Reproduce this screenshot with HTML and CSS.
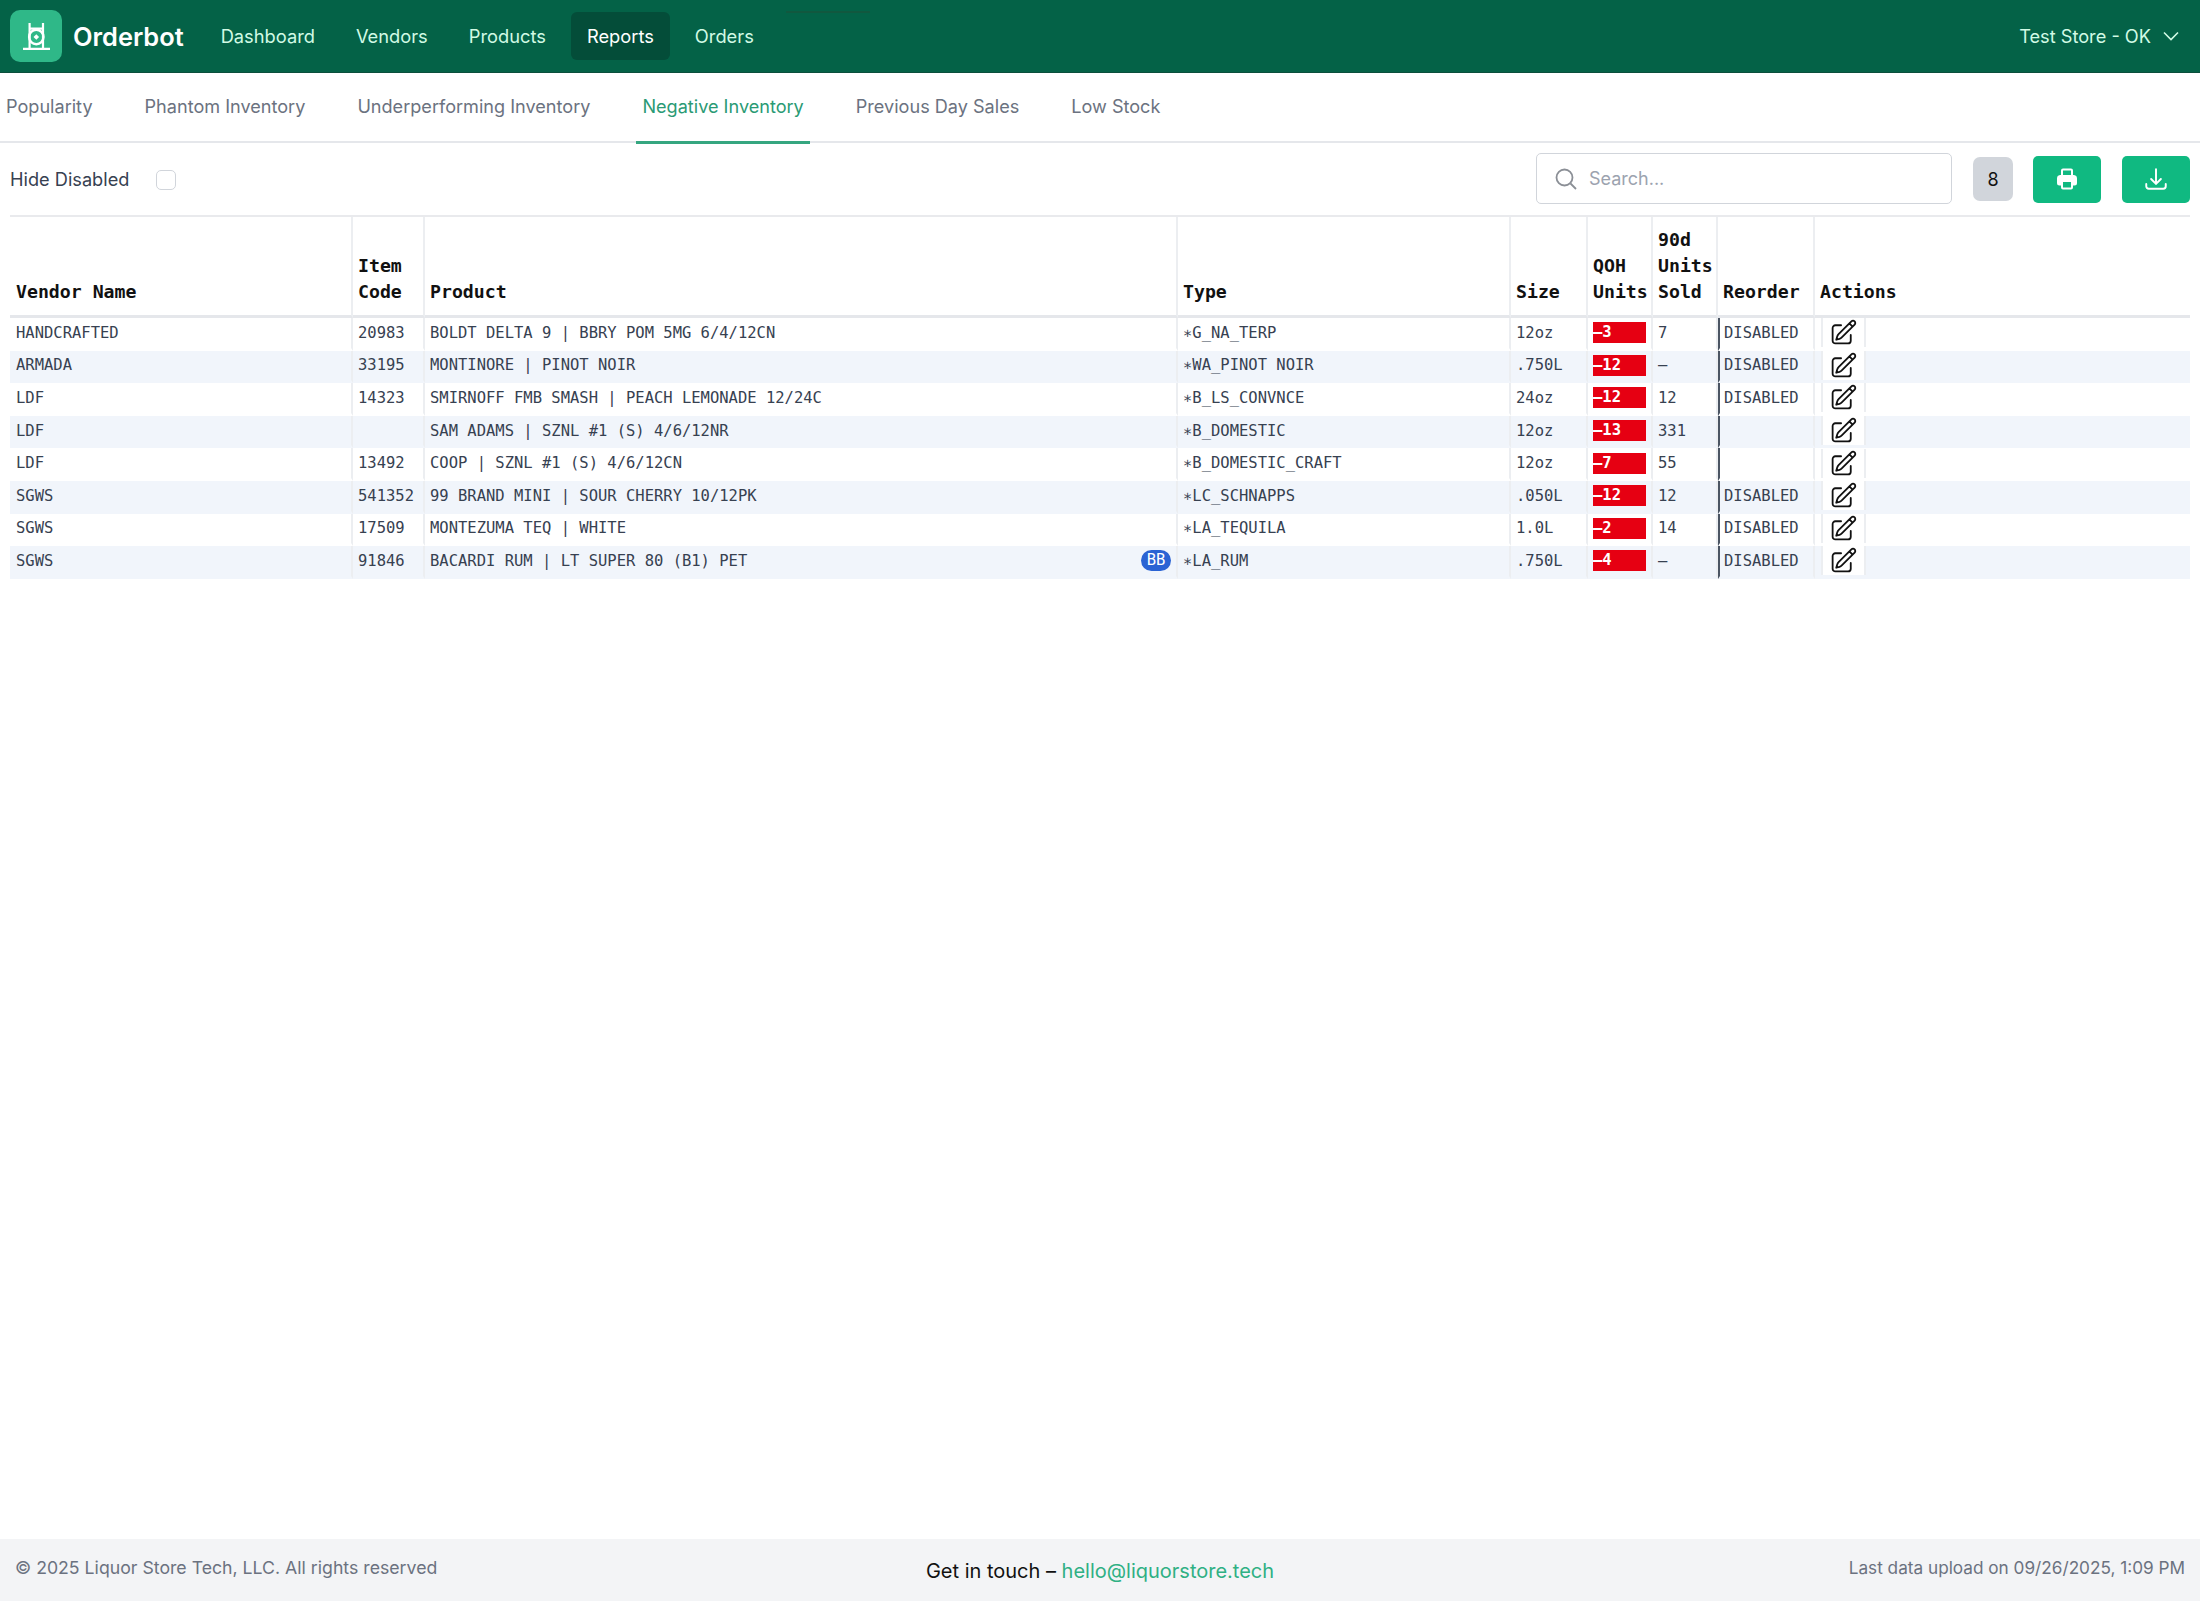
FILE: index.html
```html
<!DOCTYPE html>
<html lang="en">
<head>
    <meta charset="UTF-8">
    <meta name="viewport" content="width=device-width, initial-scale=1.0">
    <title>Orderbot - Negative Inventory</title>
    <link rel="stylesheet" href="styles.css">
</head>
<body>
    <!-- Top navigation -->
    <header class="topbar">
        <div class="brand">
            <span class="brand-logo">
                <svg viewBox="0 0 52 52" width="52" height="52" fill="none" stroke="#fff" stroke-width="2.2">
                    <path d="M13 38.800h27M19.600 13v25.800M33 13v25.800M19.600 18.700H33"/>
                    <circle cx="26.300" cy="27" r="7.200" stroke-width="2.400"/>
                    <path d="M26.300 24.200l2.800 2.800-2.800 2.800-2.800-2.800z" fill="#fff" stroke="none"/>
                </svg>
            </span>
            <span class="brand-name">Orderbot</span>
        </div>
        <nav class="main-nav">
            <a class="nav-link">Dashboard</a>
            <a class="nav-link">Vendors</a>
            <a class="nav-link">Products</a>
            <a class="nav-link active">Reports</a>
            <a class="nav-link">Orders</a>
        </nav>
        <div class="store-select">
            <span>Test Store - OK</span>
            <svg viewBox="0 0 24 24" width="24" height="24" fill="none" stroke="currentColor" stroke-width="1.600">
                <path d="M5 8.500l7 7 7-7"/>
            </svg>
        </div>
    </header>

    <!-- Report tabs -->
    <div class="tabs">
        <a class="tab">Popularity</a>
        <a class="tab">Phantom Inventory</a>
        <a class="tab">Underperforming Inventory</a>
        <a class="tab active">Negative Inventory</a>
        <a class="tab">Previous Day Sales</a>
        <a class="tab">Low Stock</a>
    </div>

    <main class="content">
        <div class="toolbar">
            <label class="hide-disabled">
                <span>Hide Disabled</span>
                <span class="checkbox"></span>
            </label>
            <div class="search">
                <svg viewBox="0 0 24 24" width="24" height="24" fill="none" stroke="#8b8f96" stroke-width="1.800">
                    <circle cx="10.500" cy="10.500" r="8"/>
                    <path d="M16.500 16.500L22 22"/>
                </svg>
                <span>Search...</span>
            </div>
            <span class="count">8</span>
            <button class="btn btn-print" type="button">
                <svg viewBox="0 0 24 24" width="24" height="24" fill="#fff">
                    <path fill-rule="evenodd" d="M6 3.500A2 2 0 0 1 8 1.500h8a2 2 0 0 1 2 2V8h1a3.500 3.500 0 0 1 3 3.500V16a2.500 2.500 0 0 1-2.500 2.500H18v2a2 2 0 0 1-2 2H8a2 2 0 0 1-2-2v-2H4.500A2.500 2.500 0 0 1 2 16v-4.500A3.500 3.500 0 0 1 5 8h1zM8 3.500V8h8V3.500zM8 15v5.500h8V15z"/>
                </svg>
            </button>
            <button class="btn btn-download" type="button">
                <svg viewBox="0 0 24 24" width="26" height="26" fill="none" stroke="#fff" stroke-width="1.800" stroke-linecap="round" stroke-linejoin="round">
                    <path d="M3 16.500v2.250A2.250 2.250 0 0 0 5.250 21h13.500A2.250 2.250 0 0 0 21 18.750V16.500M16.500 12L12 16.500m0 0L7.500 12m4.500 4.500V3"/>
                </svg>
            </button>
        </div>

        <table class="report-table">
            <colgroup>
                <col class="col-vendor">
                <col class="col-code">
                <col class="col-product">
                <col class="col-type">
                <col class="col-size">
                <col class="col-qoh">
                <col class="col-sold">
                <col class="col-reorder">
                <col>
            </colgroup>
            <thead>
                <tr>
                    <th>Vendor Name</th>
                    <th>Item Code</th>
                    <th>Product</th>
                    <th>Type</th>
                    <th>Size</th>
                    <th>QOH Units</th>
                    <th>90d Units Sold</th>
                    <th>Reorder</th>
                    <th>Actions</th>
                </tr>
            </thead>
            <tbody id="rows"></tbody>
        </table>
    </main>

    <footer class="footer">
        <span class="footer-copy">© 2025 Liquor Store Tech, LLC. All rights reserved</span>
        <span class="footer-contact">Get in touch – <a class="footer-link">hello@liquorstore.tech</a></span>
        <span class="footer-upload">Last data upload on 09/26/2025, 1:09 PM</span>
    </footer>

    <script>
        var items = [
            ["HANDCRAFTED", "20983", "BOLDT DELTA 9 | BBRY POM 5MG 6/4/12CN", "∗G_NA_TERP", "12oz", "–3", "7", "DISABLED"],
            ["ARMADA", "33195", "MONTINORE | PINOT NOIR", "∗WA_PINOT NOIR", ".750L", "–12", "–", "DISABLED"],
            ["LDF", "14323", "SMIRNOFF FMB SMASH | PEACH LEMONADE 12/24C", "∗B_LS_CONVNCE", "24oz", "–12", "12", "DISABLED"],
            ["LDF", "", "SAM ADAMS | SZNL #1 (S) 4/6/12NR", "∗B_DOMESTIC", "12oz", "–13", "331", ""],
            ["LDF", "13492", "COOP | SZNL #1 (S) 4/6/12CN", "∗B_DOMESTIC_CRAFT", "12oz", "–7", "55", ""],
            ["SGWS", "541352", "99 BRAND MINI | SOUR CHERRY 10/12PK", "∗LC_SCHNAPPS", ".050L", "–12", "12", "DISABLED"],
            ["SGWS", "17509", "MONTEZUMA TEQ | WHITE", "∗LA_TEQUILA", "1.0L", "–2", "14", "DISABLED"],
            ["SGWS", "91846", "BACARDI RUM | LT SUPER 80 (B1) PET", "∗LA_RUM", ".750L", "–4", "–", "DISABLED", true]
        ];

        var pencil = '<svg viewBox="0 0 24 24" width="29" height="29" fill="none" stroke="#111" stroke-width="1.500" stroke-linecap="round" stroke-linejoin="round">' +
            '<path d="m16.862 4.487 1.687-1.688a1.875 1.875 0 1 1 2.652 2.652L10.582 16.070a4.500 4.500 0 0 1-1.897 1.130L6 18l.8-2.685a4.500 4.500 0 0 1 1.130-1.897l8.932-8.931Zm0 0L19.500 7.125M18 14v4.750A2.250 2.250 0 0 1 15.750 21H5.250A2.250 2.250 0 0 1 3 18.750V8.250A2.250 2.250 0 0 1 5.250 6H10"/></svg>';

        var rows = items.map(function(item) {
            var badge = item[8] ? '<span class="badge">BB</span>' : '';
            return `<tr>
                <td>${item[0]}</td>
                <td>${item[1]}</td>
                <td><div class="product-cell"><span>${item[2]}</span>${badge}</div></td>
                <td>${item[3]}</td>
                <td>${item[4]}</td>
                <td><span class="qoh">${item[5]}</span></td>
                <td>${item[6]}</td>
                <td class="reorder">${item[7]}</td>
                <td class="actions"><span class="edit">${pencil}</span></td>
            </tr>`;
        });
        document.getElementById("rows").innerHTML = rows.join("");
    </script>
</body>
</html>
```

FILE: styles.css
```css
* {
    box-sizing: border-box;
}
html, body {
    height: 100%;
}
body {
    margin: 0;
    display: flex;
    flex-direction: column;
    background: #fff;
    font-family: Inter, "Liberation Sans", sans-serif;
    color: #111827;
}
.topbar {
    position: relative;
    height: 73px;
    flex: none;
    display: flex;
    align-items: center;
    padding: 0 17px 0 10px;
    background: #046247;
    border-bottom: 1px solid #0b4f3c;
}
/* faint mark along the top of the bar */
.topbar::before {
    content: "";
    position: absolute;
    left: 786px;
    top: 11px;
    width: 84px;
    height: 2px;
    background: #11583f;
}
.brand {
    display: flex;
    align-items: center;
    gap: 11px;
}
.brand-logo {
    width: 52px;
    height: 52px;
    display: block;
    border-radius: 10px;
    background: #2fb888;
}
.brand-name {
    color: #fff;
    font-size: 25.400px;
    font-weight: 600;
}
.main-nav {
    display: flex;
    align-items: center;
    gap: 9px;
    margin-left: 21px;
}
.nav-link {
    padding: 13px 16px;
    border-radius: 6px;
    color: #d1fae5;
    font-size: 18.300px;
    line-height: 22px;
}
.nav-link.active {
    background: #044d39;
    color: #fff;
}
.store-select {
    margin-left: auto;
    display: flex;
    align-items: center;
    gap: 8px;
    color: #d1fae5;
    font-size: 18.200px;
}
.tabs {
    height: 70px;
    flex: none;
    display: flex;
    gap: 40px;
    border-bottom: 2px solid #e5e7eb;
}
.tab {
    height: 70px;
    padding: 0 6px;
    line-height: 67px;
    color: #6b7280;
    font-size: 18.100px;
}
.tab.active {
    height: 71px;
    color: #2a9a74;
    border-bottom: 3px solid #35a680;
}
.content {
    flex: 1;
    padding: 0 10px;
}
.toolbar {
    height: 74px;
    display: flex;
    align-items: center;
    border-bottom: 2px solid #e9eaed;
}
.hide-disabled {
    display: flex;
    align-items: center;
    gap: 27px;
    font-size: 18.200px;
    color: #374151;
}
.checkbox {
    width: 20px;
    height: 20px;
    margin-top: 2px;
    border: 1.500px solid #d1d5db;
    border-radius: 5px;
}
.search {
    width: 416px;
    height: 51px;
    margin-top: -1px;
    margin-left: auto;
    display: flex;
    align-items: center;
    gap: 11px;
    padding-left: 17px;
    border: 1.500px solid #d1d5db;
    border-radius: 5px;
    color: #9ca3af;
    font-size: 18px;
}
.count {
    width: 40px;
    height: 44px;
    margin-left: 21px;
    display: flex;
    align-items: center;
    justify-content: center;
    border-radius: 7px;
    background: #d1d5db;
    color: #111;
    font-size: 18px;
}
.btn {
    width: 68px;
    height: 47px;
    display: flex;
    align-items: center;
    justify-content: center;
    padding: 0;
    border: none;
    border-radius: 5px;
    background: #10b981;
}
.btn-print {
    margin-left: 20px;
}
.btn-download {
    margin-left: 21px;
}
.report-table {
    width: 100%;
    table-layout: fixed;
    border-collapse: separate;
    border-spacing: 0;
    font-family: "DejaVu Sans Mono", "Liberation Mono", monospace;
    font-size: 15.500px;
    color: #374151;
}
.col-vendor { width: 343px; }
.col-code { width: 72px; }
.col-product { width: 753px; }
.col-type { width: 333px; }
.col-size { width: 77px; }
.col-qoh { width: 65px; }
.col-sold { width: 65px; }
.col-reorder { width: 97px; }
.report-table th {
    height: 101px;
    padding: 0 5px 10px;
    vertical-align: bottom;
    text-align: left;
    font-size: 18.200px;
    line-height: 26px;
    font-weight: 700;
    color: #111;
    border-right: 2px solid #eceef1;
    border-bottom: 3px solid #e5e7eb;
}
.report-table th:last-child {
    border-right: none;
}
.report-table td {
    height: 32.600px;
    padding: 0 5px;
    line-height: 20px;
    white-space: nowrap;
    border-right: 2px solid #eceef1;
    border-bottom: 3px solid transparent;
}
.report-table th:first-child, .report-table td:first-child {
    padding-left: 6px;
}
.report-table td:last-child {
    border-right: none;
}
.report-table tbody tr:nth-child(even) {
    background: #f1f5fb;
}
.product-cell {
    display: flex;
    justify-content: space-between;
    align-items: center;
}
.badge {
    width: 30px;
    height: 21px;
    border-radius: 11px;
    background: #2a63d4;
    color: #fff;
    font-size: 15.500px;
    line-height: 21px;
    text-align: center;
}
.qoh {
    display: block;
    height: 21px;
    background: #e60012;
    color: #fff;
    font-weight: 700;
    line-height: 21px;
}
.report-table td.reorder {
    padding-left: 4px;
    border-left: 2px solid #4b5563;
}
.report-table td.actions {
    padding: 0 0 0 6px;
}
.edit {
    width: 45px;
    height: 29px;
    display: flex;
    align-items: center;
    justify-content: center;
    background: #fff;
    border-right: 2px solid #eceef1;
    border-left: 2px solid #eceef1;
}
.footer {
    height: 62px;
    flex: none;
    display: grid;
    grid-template-columns: 1fr auto 1fr;
    align-items: center;
    padding: 0 15px;
    background: #f3f4f6;
}
.footer-copy, .footer-upload {
    color: #6b7280;
    margin-top: -6px;
}
.footer-copy {
    font-size: 17.700px;
}
.footer-upload {
    font-size: 17.200px;
    text-align: right;
}
.footer-contact {
    color: #111;
    font-size: 20px;
    margin-top: 1px;
}
.footer-link {
    color: #2fb084;
}
```
